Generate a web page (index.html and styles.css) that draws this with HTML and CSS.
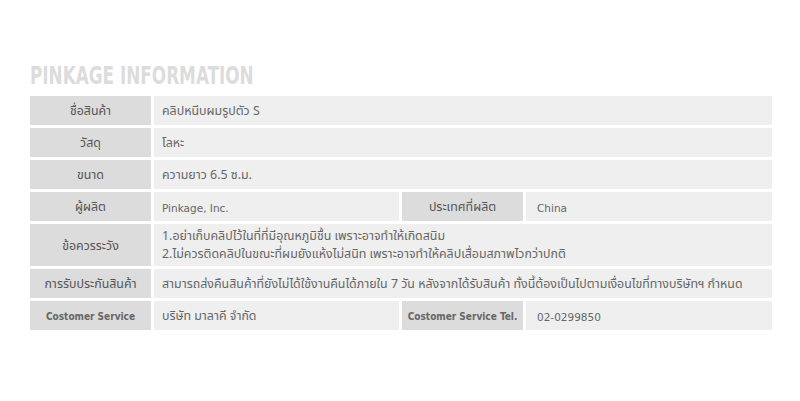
FILE: index.html
```html
<!DOCTYPE html>
<html lang="th">
<head>
<meta charset="utf-8">
<link rel="stylesheet" href="styles.css">
</head>
<body>
<div class="wrap">
  <h1 class="title">PINKAGE INFORMATION</h1>
  <div class="info">
    <div class="lbl">ชื่อสินค้า</div>
    <div class="val span3">คลิปหนีบผมรูปตัว S</div>

    <div class="lbl">วัสดุ</div>
    <div class="val span3">โลหะ</div>

    <div class="lbl">ขนาด</div>
    <div class="val span3">ความยาว 6.5 ซ.ม.</div>

    <div class="lbl">ผู้ผลิต</div>
    <div class="val latin">Pinkage, Inc.</div>
    <div class="lbl">ประเทศที่ผลิต</div>
    <div class="val latin second">China</div>

    <div class="lbl">ข้อควรระวัง</div>
    <div class="val span3 multi">
      <span>1.อย่าเก็บคลิปไว้ในที่ที่มีอุณหภูมิชื้น เพราะอาจทำให้เกิดสนิม</span>
      <span>2.ไม่ควรติดคลิปในขณะที่ผมยังแห้งไม่สนิท เพราะอาจทำให้คลิปเสื่อมสภาพไวกว่าปกติ</span>
    </div>

    <div class="lbl">การรับประกันสินค้า</div>
    <div class="val span3">สามารถส่งคืนสินค้าที่ยังไม่ได้ใช้งานคืนได้ภายใน 7 วัน หลังจากได้รับสินค้า ทั้งนี้ต้องเป็นไปตามเงื่อนไขที่ทางบริษัทฯ กำหนด</div>

    <div class="lbl en">Costomer Service</div>
    <div class="val">บริษัท มาลาคี จำกัด</div>
    <div class="lbl en">Costomer Service Tel.</div>
    <div class="val latin second">02-0299850</div>
  </div>
</div>
</body>
</html>
```

FILE: styles.css
```css
html, body {
  margin: 0;
  padding: 0;
  background: #ffffff;
}

.wrap {
  padding: 62px 0 0 30px;
  width: 742px;
}

.title {
  margin: 0 0 6px 0;
  font-family: "DejaVu Sans Condensed", "DejaVu Sans", sans-serif;
  font-weight: bold;
  font-size: 24px;
  line-height: 28px;
  color: #dcdcdc;
  transform: scaleX(0.78);
  transform-origin: left center;
  white-space: nowrap;
}

.info {
  display: grid;
  grid-template-columns: 121px 245px 121px 246px;
  grid-template-rows: 29px 29px 29px 29px 42px 29px 29px;
  gap: 3px;
  font-family: "Noto Sans Thai", "Noto Sans", "Liberation Sans", sans-serif;
  font-size: 12.4px;
}

.lbl {
  background: #dcdcdc;
  color: #555555;
  display: flex;
  align-items: center;
  justify-content: center;
  padding-top: 2px;
  box-sizing: border-box;
  white-space: nowrap;
}

.val {
  background: #efefef;
  color: #666666;
  display: flex;
  align-items: center;
  padding: 2px 0 0 8px;
  box-sizing: border-box;
  white-space: nowrap;
}

.second {
  padding-left: 11px;
}

.span3 {
  grid-column: span 3;
}

.multi {
  flex-direction: column;
  align-items: flex-start;
  justify-content: center;
  line-height: 18px;
  padding-top: 1px;
}

.en {
  font-family: "DejaVu Sans Condensed", "DejaVu Sans", sans-serif;
  font-size: 10px;
  font-weight: bold;
  color: #666666;
}

.latin {
  font-family: "DejaVu Sans", sans-serif;
  font-size: 10.5px;
  color: #666666;
}
```
